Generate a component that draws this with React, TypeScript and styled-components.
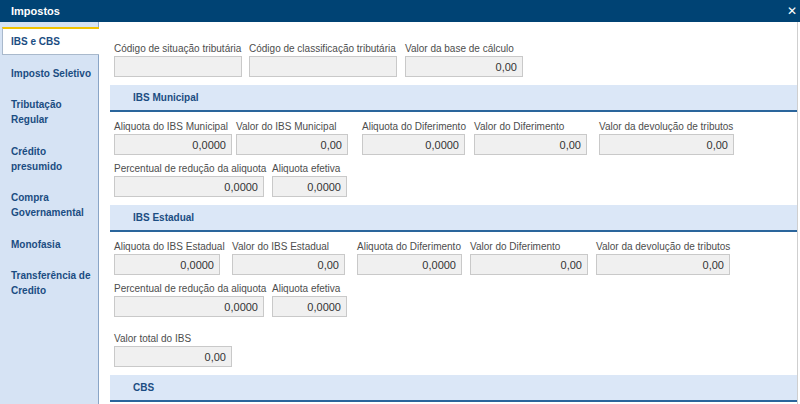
import React from "react";
import styled, { createGlobalStyle } from "styled-components";

const GlobalStyle = createGlobalStyle`
  html, body {
    margin: 0;
    padding: 0;
    background: #ffffff;
  }
  body {
    font-family: "Liberation Sans", Arial, sans-serif;
    width: 800px;
    height: 404px;
    overflow: hidden;
  }
`;

interface IFieldData {
  label: string;
  value: string;
  slot?: number;
  input: number;
}

const tabs = [
  "IBS e CBS",
  "Imposto Seletivo",
  "Tributação\nRegular",
  "Crédito\npresumido",
  "Compra\nGovernamental",
  "Monofasia",
  "Transferência de\nCredito",
];

const topFields: IFieldData[] = [
  { label: "Código de situação tributária", value: "", slot: 135, input: 128 },
  { label: "Código de classificação tributária", value: "", slot: 156, input: 148 },
  { label: "Valor da base de cálculo", value: "0,00", input: 118 },
];

const municipalRow: IFieldData[] = [
  { label: "Aliquota do IBS Municipal", value: "0,0000", slot: 122, input: 118 },
  { label: "Valor do IBS Municipal", value: "0,00", slot: 126, input: 112 },
  { label: "Aliquota do Diferimento", value: "0,0000", slot: 112, input: 103 },
  { label: "Valor do Diferimento", value: "0,00", slot: 125, input: 113 },
  { label: "Valor da devolução de tributos", value: "0,00", input: 135 },
];

const estadualRow: IFieldData[] = [
  { label: "Aliquota do IBS Estadual", value: "0,0000", slot: 118, input: 106 },
  { label: "Valor do IBS Estadual", value: "0,00", slot: 125, input: 113 },
  { label: "Aliquota do Diferimento", value: "0,0000", slot: 113, input: 105 },
  { label: "Valor do Diferimento", value: "0,00", slot: 126, input: 118 },
  { label: "Valor da devolução de tributos", value: "0,00", input: 134 },
];

const reductionRow: IFieldData[] = [
  { label: "Percentual de redução da aliquota", value: "0,0000", slot: 158, input: 150 },
  { label: "Aliquota efetiva", value: "0,0000", input: 75 },
];

const FieldRow = ({ fields }: { fields: IFieldData[] }) => (
  <Row>
    {fields.map((f) => (
      <Field key={f.label} $slot={f.slot}>
        <Label>{f.label}</Label>
        <ValueBox $width={f.input}>{f.value}</ValueBox>
      </Field>
    ))}
  </Row>
);

export default function App() {
  return (
    <>
      <GlobalStyle />
      <Window>
        <TitleBar>
          <Title>Impostos</Title>
          <CloseButton>✕</CloseButton>
        </TitleBar>
        <Body>
          <Sidebar>
            {tabs.map((t, i) => (
              <Tab key={t} $active={i === 0}>
                {t}
              </Tab>
            ))}
          </Sidebar>
          <Content>
            <Block>
              <FieldRow fields={topFields} />
            </Block>

            <SectionHeader>IBS Municipal</SectionHeader>
            <Block>
              <FieldRow fields={municipalRow} />
              <FieldRow fields={reductionRow} />
            </Block>

            <SectionHeader>IBS Estadual</SectionHeader>
            <Block>
              <FieldRow fields={estadualRow} />
              <FieldRow fields={reductionRow} />
              <TotalRow>
                <FieldRow
                  fields={[{ label: "Valor total do IBS", value: "0,00", input: 118 }]}
                />
              </TotalRow>
            </Block>

            <SectionHeader>CBS</SectionHeader>
          </Content>
        </Body>
      </Window>
    </>
  );
}

const Window = styled.div`
  width: 800px;
  height: 404px;
  display: flex;
  flex-direction: column;
  overflow: hidden;
`;

const TitleBar = styled.div`
  height: 22px;
  flex-shrink: 0;
  background: #004374;
  display: flex;
  align-items: center;
  justify-content: space-between;
  padding: 0 3px 0 11px;
  color: #ffffff;
`;

const Title = styled.span`
  font-size: 11px;
  font-weight: bold;
`;

const CloseButton = styled.span`
  font-size: 12px;
  font-weight: bold;
  font-family: "DejaVu Sans", sans-serif;
  line-height: 1;
`;

const Body = styled.div`
  flex: 1;
  display: flex;
  min-height: 0;
`;

const Sidebar = styled.div`
  width: 96px;
  flex-shrink: 0;
  background: #d6e3f4;
  border-right: 1px solid #8aa5c6;
  padding: 5px 0 0 2px;
  display: flex;
  flex-direction: column;
`;

const Tab = styled.div<{ $active?: boolean }>`
  font-size: 10px;
  font-weight: bold;
  line-height: 15px;
  color: #1b4d82;
  white-space: pre-line;
  padding: 5px 0 5px 8px;
  margin-bottom: 3.5px;
  border-top: 2px solid ${({ $active }) => ($active ? "#f2c300" : "transparent")};
  border-bottom: 1px solid ${({ $active }) => ($active ? "#a9b9cc" : "transparent")};
  border-left: 1px solid ${({ $active }) => ($active ? "#a9b9cc" : "transparent")};
  background: ${({ $active }) => ($active ? "#ffffff" : "transparent")};
  margin-right: ${({ $active }) => ($active ? "-1px" : "0")};
  position: relative;
`;

const Content = styled.div`
  flex: 1;
  padding-left: 11px;
  margin-right: 2px;
  border-right: 1px solid #cfcfcf;
  display: flex;
  flex-direction: column;
  overflow: hidden;
`;

const Block = styled.div`
  padding: 8px 0 8px 4px;
  display: flex;
  flex-direction: column;
  gap: 7px;

  &:first-child {
    padding-top: 20px;
  }
`;

const TotalRow = styled.div`
  margin-top: 8px;
`;

const SectionHeader = styled.div`
  height: 25px;
  flex-shrink: 0;
  background: #dbe7f7;
  border-bottom: 2px solid #2a659c;
  display: flex;
  align-items: center;
  padding-left: 23px;
  font-size: 10px;
  font-weight: bold;
  color: #1b4d82;
`;

const Row = styled.div`
  display: flex;
`;

const Field = styled.div<{ $slot?: number }>`
  display: flex;
  flex-direction: column;
  width: ${({ $slot }) => ($slot ? `${$slot}px` : "auto")};
  flex-shrink: 0;
`;

const Label = styled.label`
  font-size: 10px;
  line-height: 13px;
  color: #4d4d4d;
  white-space: nowrap;
  margin-bottom: 1px;
`;

const ValueBox = styled.div<{ $width: number }>`
  box-sizing: border-box;
  width: ${({ $width }) => $width}px;
  height: 21px;
  background: #f0f0f0;
  border: 1px solid #c9c9c9;
  font-size: 11px;
  color: #333333;
  display: flex;
  align-items: center;
  justify-content: flex-end;
  padding-right: 5px;
`;
